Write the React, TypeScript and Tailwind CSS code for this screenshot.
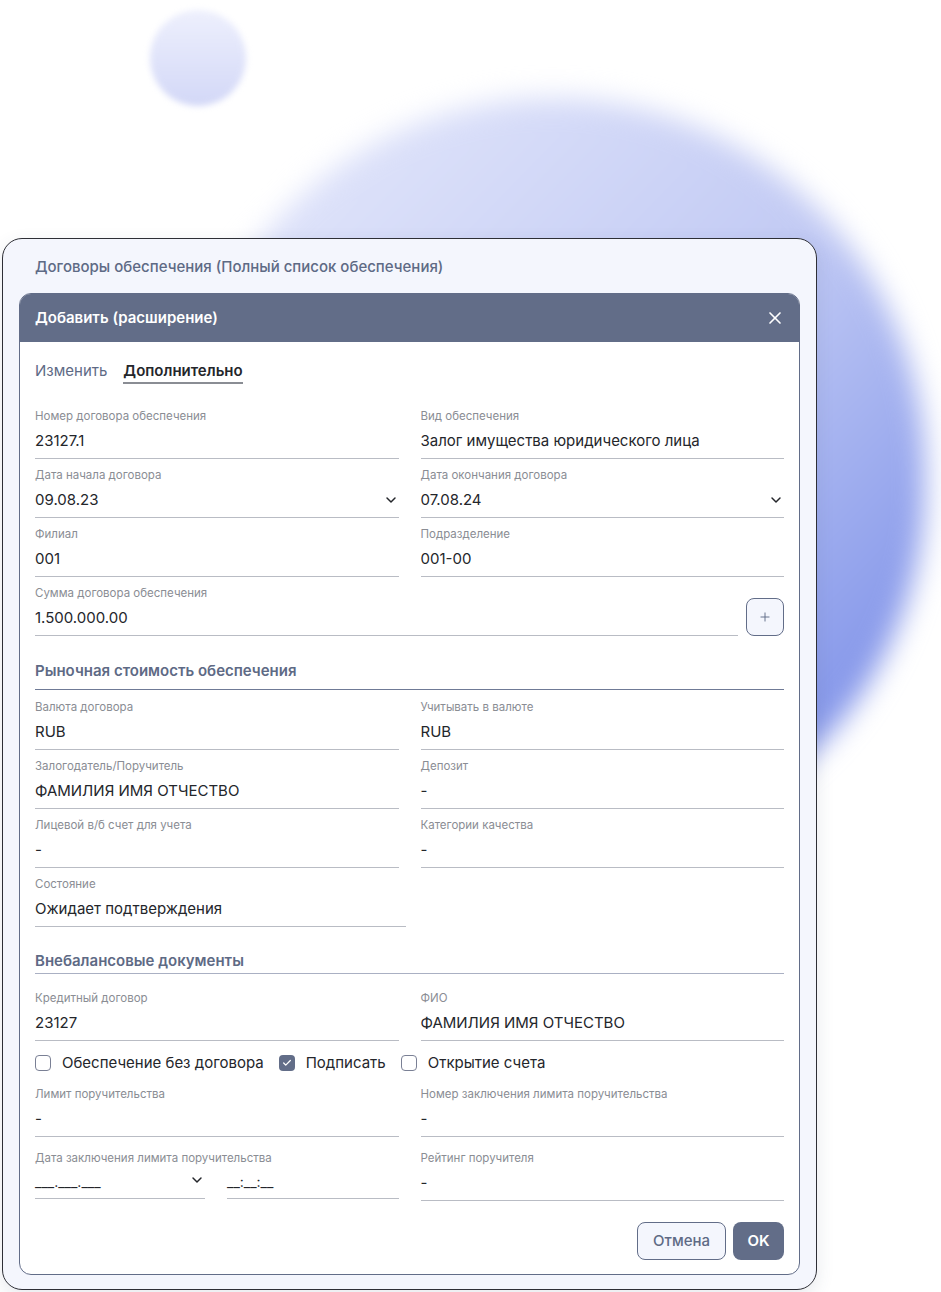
import { X, ChevronDown, Plus, Check } from 'lucide-react';

const font = { fontFamily: 'Inter, "Noto Sans", sans-serif' };

function Field({
  label,
  value,
  chevron,
  className = '',
}: {
  label: string;
  value: string;
  chevron?: boolean;
  className?: string;
}) {
  return (
    <div className={`border-b border-[#b9bcc4] pb-[7px] ${className}`}>
      <div className="h-[14px] text-[11.5px] leading-[14px] text-[#8a8d94]">{label}</div>
      <div className="mt-[8px] flex h-[20px] items-center justify-between text-[15px] leading-[20px] text-[#24262b]">
        <span>{value}</span>
        {chevron && <ChevronDown className="h-[16px] w-[16px] text-[#24262b]" strokeWidth={2.2} />}
      </div>
    </div>
  );
}

function SectionTitle({ text, line, className = '' }: { text: string; line: string; className?: string }) {
  return (
    <div className={`border-b ${line} ${className}`}>
      <div className="text-[15px] font-semibold leading-[20px] text-[#5e6a85]">{text}</div>
    </div>
  );
}

function CheckBox({ label, checked }: { label: string; checked?: boolean }) {
  return (
    <label className="flex items-center gap-[11px]">
      {checked ? (
        <span className="flex h-[16px] w-[16px] items-center justify-center rounded-[4px] bg-[#626d88]">
          <Check className="h-[10px] w-[10px] text-white" strokeWidth={3} />
        </span>
      ) : (
        <span className="h-[16px] w-[16px] rounded-[4px] border border-[#7a8095] bg-white" />
      )}
      <span className="text-[15px] leading-[20px] text-[#24262b]">{label}</span>
    </label>
  );
}

export default function App() {
  return (
    <div className="relative h-[1292px] w-[941px] overflow-hidden bg-white" style={font}>
      {/* background blobs */}
      <div className="pointer-events-none absolute left-[150px] top-[10px] h-[96px] w-[96px] rounded-full bg-gradient-to-b from-[#eef0fd] to-[#d3d8f7] blur-[3px]" />
      <div className="pointer-events-none absolute left-[180px] top-[98px] h-[760px] w-[745px] rounded-full bg-gradient-to-br from-[#e9ecfc] via-[#c3cbf4] to-[#6d80e4] blur-[14px]" />

      <div className="relative ml-[2px] mt-[238px] w-[815px] rounded-[20px] border-[1.5px] border-[#2e2f36] bg-[#f4f6fd] px-[16px] pb-[14px] shadow-[0_6px_18px_rgba(60,70,110,0.12)]">
        <div className="flex h-[54px] items-center pl-[16px] pt-[2px] text-[15px] font-medium text-[#5e6a85]">
          Договоры обеспечения (Полный список обеспечения)
        </div>

        <div className="overflow-hidden rounded-[12px] border border-[#626d88] bg-white">
          <div className="flex h-[48px] items-center justify-between bg-[#626d88] pl-[15px] pr-[14px]">
            <span className="text-[15px] font-semibold text-white">Добавить (расширение)</span>
            <X className="h-[20px] w-[20px] text-white" strokeWidth={2} />
          </div>

          <div className="px-[15px] pb-[14px] pt-[19px]">
            <div className="flex gap-[16px] text-[15px] leading-[20px]">
              <span className="text-[#5e6a85]">Изменить</span>
              <span className="border-b-2 border-[#8a8d94] pb-[1px] font-semibold text-[#24262b]">Дополнительно</span>
            </div>

            <div className="mt-[25px] grid grid-cols-2 gap-x-[22px] gap-y-[9px]">
              <Field label="Номер договора обеспечения" value="23127.1" />
              <Field label="Вид обеспечения" value="Залог имущества юридического лица" />
              <Field label="Дата начала договора" value="09.08.23" chevron />
              <Field label="Дата окончания договора" value="07.08.24" chevron />
              <Field label="Филиал" value="001" />
              <Field label="Подразделение" value="001-00" />
              <div className="col-span-2 flex items-end gap-[8px]">
                <Field className="flex-1" label="Сумма договора обеспечения" value="1.500.000.00" />
                <button className="flex h-[38px] w-[38px] items-center justify-center rounded-[8px] border border-[#626d88] bg-[#f4f6fd]">
                  <Plus className="h-[14px] w-[14px] text-[#5e6a85]" strokeWidth={1.6} />
                </button>
              </div>
            </div>

            <SectionTitle
              text="Рыночная стоимость обеспечения"
              line="border-[#6f7a96] pb-[8px]"
              className="mt-[25px]"
            />

            <div className="mt-[10px] grid grid-cols-2 gap-x-[22px] gap-y-[9px]">
              <Field label="Валюта договора" value="RUB" />
              <Field label="Учитывать в валюте" value="RUB" />
              <Field label="Залогодатель/Поручитель" value="ФАМИЛИЯ ИМЯ ОТЧЕСТВО" />
              <Field label="Депозит" value="-" />
              <Field label="Лицевой в/б счет для учета" value="-" />
              <Field label="Категории качества" value="-" />
              <Field className="w-[371px]" label="Состояние" value="Ожидает подтверждения" />
            </div>

            <SectionTitle
              text="Внебалансовые документы"
              line="border-[#aab0c3] pb-[2px]"
              className="mt-[24px]"
            />

            <div className="mt-[17px] grid grid-cols-2 gap-x-[22px]">
              <Field label="Кредитный договор" value="23127" />
              <Field label="ФИО" value="ФАМИЛИЯ ИМЯ ОТЧЕСТВО" />
            </div>

            <div className="mt-[12px] flex items-center gap-[15px]">
              <CheckBox label="Обеспечение без договора" />
              <CheckBox label="Подписать" checked />
              <CheckBox label="Открытие счета" />
            </div>

            <div className="mt-[14px] grid grid-cols-2 gap-x-[22px] gap-y-[14px]">
              <Field label="Лимит поручительства" value="-" />
              <Field label="Номер заключения лимита поручительства" value="-" />
              <div>
                <div className="h-[14px] text-[11.5px] leading-[14px] text-[#8a8d94]">
                  Дата заключения лимита поручительства
                </div>
                <div className="mt-[7px] flex gap-[22px]">
                  <div className="flex w-[170px] items-end justify-between border-b border-[#b9bcc4] pb-[6px]">
                    <span className="text-[14px] leading-[20px] text-[#24262b]">___.___.___</span>
                    <ChevronDown className="mb-[4px] h-[16px] w-[16px] text-[#24262b]" strokeWidth={2.2} />
                  </div>
                  <div className="flex flex-1 items-end border-b border-[#b9bcc4] pb-[6px]">
                    <span className="text-[14px] leading-[20px] text-[#24262b]">__:__:__</span>
                  </div>
                </div>
              </div>
              <Field label="Рейтинг поручителя" value="-" />
            </div>

            <div className="mt-[21px] flex justify-end gap-[7px]">
              <button className="h-[38px] w-[89px] rounded-[8px] border border-[#626d88] bg-[#f4f6fd] text-[15px] font-medium text-[#5e6a85]">
                Отмена
              </button>
              <button className="h-[38px] w-[51px] rounded-[8px] bg-[#626d88] text-[15px] font-semibold text-white">
                OK
              </button>
            </div>
          </div>
        </div>
      </div>
    </div>
  );
}
